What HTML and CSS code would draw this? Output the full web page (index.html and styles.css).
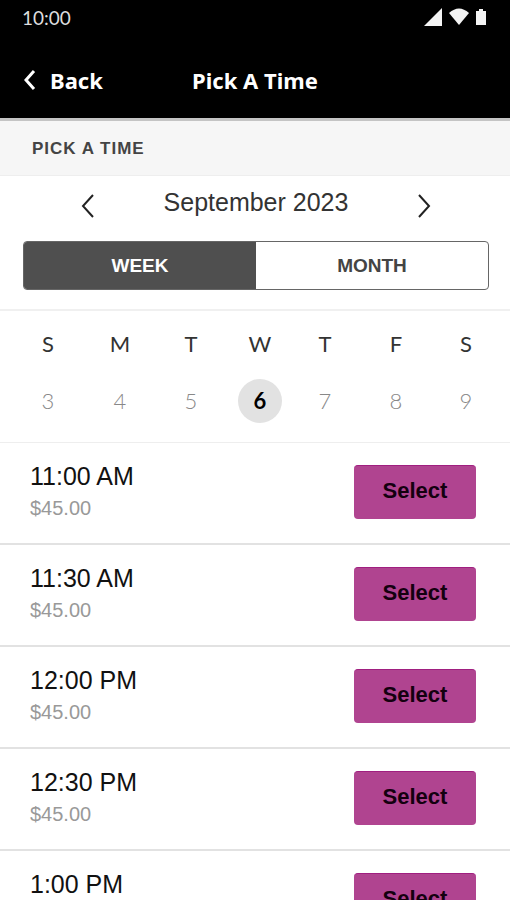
FILE: index.html
```html
<!DOCTYPE html>
<html lang="en">
<head>
    <meta charset="UTF-8">
    <meta name="viewport" content="width=device-width, initial-scale=1.0">
    <title>Pick A Time</title>
    <link rel="stylesheet" href="styles.css">
</head>
<body>
    <header class="top">
        <div class="status-bar">
            <span>10:00</span>
            <div class="status-icons">
                <svg width="18" height="18" viewBox="0 0 18 18"><path d="M0 18L18 0V18Z"/></svg>
                <svg width="20" height="18" viewBox="0 0 20 18"><path d="M0 5Q10 -4 20 5L10 17Z"/></svg>
                <svg width="10" height="18" viewBox="0 0 10 18"><path d="M3 1H7V3H10V17H0V3H3Z"/></svg>
            </div>
        </div>
        <div class="nav-bar">
            <a class="back" href="#">
                <svg width="12" height="20" viewBox="0 0 12 20"><path d="M10 1L2 10L10 19"/></svg>
                Back
            </a>
            <h1>Pick A Time</h1>
        </div>
    </header>

    <h2 class="section-title">PICK A TIME</h2>

    <section class="month">
        <div class="month-nav">
            <button type="button" class="arrow" aria-label="Previous month">
                <svg width="14" height="24" viewBox="0 0 14 24"><path d="M12 1L2 12L12 23"/></svg>
            </button>
            <span class="month-name">September 2023</span>
            <button type="button" class="arrow" aria-label="Next month">
                <svg width="14" height="24" viewBox="0 0 14 24"><path d="M2 1L12 12L2 23"/></svg>
            </button>
        </div>
        <div class="view-switch">
            <button type="button" class="active">WEEK</button>
            <button type="button">MONTH</button>
        </div>
    </section>

    <section class="week">
        <span>S</span>
        <span>M</span>
        <span>T</span>
        <span>W</span>
        <span>T</span>
        <span>F</span>
        <span>S</span>
        <button type="button">3</button>
        <button type="button">4</button>
        <button type="button">5</button>
        <button type="button" class="selected">6</button>
        <button type="button">7</button>
        <button type="button">8</button>
        <button type="button">9</button>
    </section>

    <main class="slots">
        <div class="slot">
            <div>
                <div class="time">11:00 AM</div>
                <div class="price">$45.00</div>
            </div>
            <button type="button" class="select">Select</button>
        </div>
        <div class="slot">
            <div>
                <div class="time">11:30 AM</div>
                <div class="price">$45.00</div>
            </div>
            <button type="button" class="select">Select</button>
        </div>
        <div class="slot">
            <div>
                <div class="time">12:00 PM</div>
                <div class="price">$45.00</div>
            </div>
            <button type="button" class="select">Select</button>
        </div>
        <div class="slot">
            <div>
                <div class="time">12:30 PM</div>
                <div class="price">$45.00</div>
            </div>
            <button type="button" class="select">Select</button>
        </div>
        <div class="slot">
            <div>
                <div class="time">1:00 PM</div>
                <div class="price">$45.00</div>
            </div>
            <button type="button" class="select">Select</button>
        </div>
    </main>
</body>
</html>
```
FILE: styles.css
```css
* {
    box-sizing: border-box;
}

body {
    font-family: "Liberation Sans", Arial, sans-serif;
    background-color: #fff;
    color: #111;
    margin: 0;
    height: 100vh;
    display: flex;
    flex-direction: column;
}

button {
    font-family: inherit;
    padding: 0;
    border: none;
    background: none;
    color: inherit;
    cursor: pointer;
}

svg {
    display: block;
}

.top {
    background-color: #000;
    color: #fff;
    border-bottom: 3px solid #c4c4c4;
}

.status-bar {
    display: flex;
    justify-content: space-between;
    align-items: center;
    height: 34px;
    padding: 0 24px 0 22px;
    font-family: Lato, sans-serif;
    font-size: 19px;
    color: #ddd;
}

.status-icons {
    display: flex;
    gap: 7px;
    fill: #f4f4f4;
}

.nav-bar {
    display: grid;
    grid-template-columns: 1fr auto 1fr;
    align-items: center;
    height: 84px;
    padding: 8px 24px 0;
    font-family: "Noto Sans", sans-serif;
    font-size: 22px;
    font-weight: bold;
}

.nav-bar h1 {
    margin: 0;
    font-size: 22px;
}

.back {
    display: flex;
    align-items: center;
    gap: 14px;
    color: #fff;
    text-decoration: none;
}

.back svg {
    fill: none;
    stroke: #fff;
    stroke-width: 3;
}

.section-title {
    margin: 0;
    padding: 1px 32px 0;
    font-size: 17px;
    line-height: 53px;
    letter-spacing: 1px;
    color: #444;
    background-color: #f6f6f6;
    border-bottom: 1px solid #eee;
}

.month {
    padding: 10px 21px 19px 23px;
    border-bottom: 2px solid #f0f0f0;
}

.month-nav {
    display: flex;
    justify-content: space-between;
    align-items: flex-start;
    padding: 0 58px;
    height: 55px;
}

.month-name {
    font-size: 25px;
    line-height: 32px;
    color: #333;
}

.arrow {
    padding-top: 8px;
}

.arrow svg {
    fill: none;
    stroke: #222;
    stroke-width: 2;
}

.view-switch {
    display: flex;
    height: 49px;
    border: 1px solid #666;
    border-radius: 4px;
    overflow: hidden;
}

.view-switch button {
    flex: 1;
    font-size: 19px;
    font-weight: bold;
    color: #444;
}

.view-switch .active {
    background-color: #4f4f4f;
    color: #fff;
}

.week {
    display: grid;
    grid-template-columns: 72fr 72fr 70fr 68fr 62fr 80fr 60fr;
    justify-items: center;
    align-items: center;
    row-gap: 21px;
    padding: 19px 14px 19px 12px;
    border-bottom: 1px solid #eee;
    font-family: Lato, sans-serif;
    font-size: 22px;
}

.week span {
    line-height: 28px;
    color: #333;
}

.week button {
    width: 44px;
    height: 44px;
    padding-bottom: 2px;
    border-radius: 50%;
    font-size: 22px;
    font-weight: 300;
    color: #888;
}

.week .selected {
    background-color: #e2e2e2;
    color: #000;
    font-weight: bold;
}

.slots {
    flex: 1;
    overflow-y: auto;
    scrollbar-width: none;
}

.slot {
    display: flex;
    justify-content: space-between;
    align-items: center;
    height: 102px;
    padding: 0 34px 2px 30px;
    border-bottom: 2px solid #e2e2e2;
}

.time {
    font-size: 25px;
    line-height: 32px;
}

.price {
    font-size: 20px;
    line-height: 32px;
    color: #999;
}

.select {
    width: 122px;
    height: 54px;
    padding-bottom: 4px;
    border-radius: 4px;
    background-color: #b04490;
    border-top: 1px solid #a01f80;
    font-size: 22px;
    font-weight: bold;
    color: #14000f;
}
```
